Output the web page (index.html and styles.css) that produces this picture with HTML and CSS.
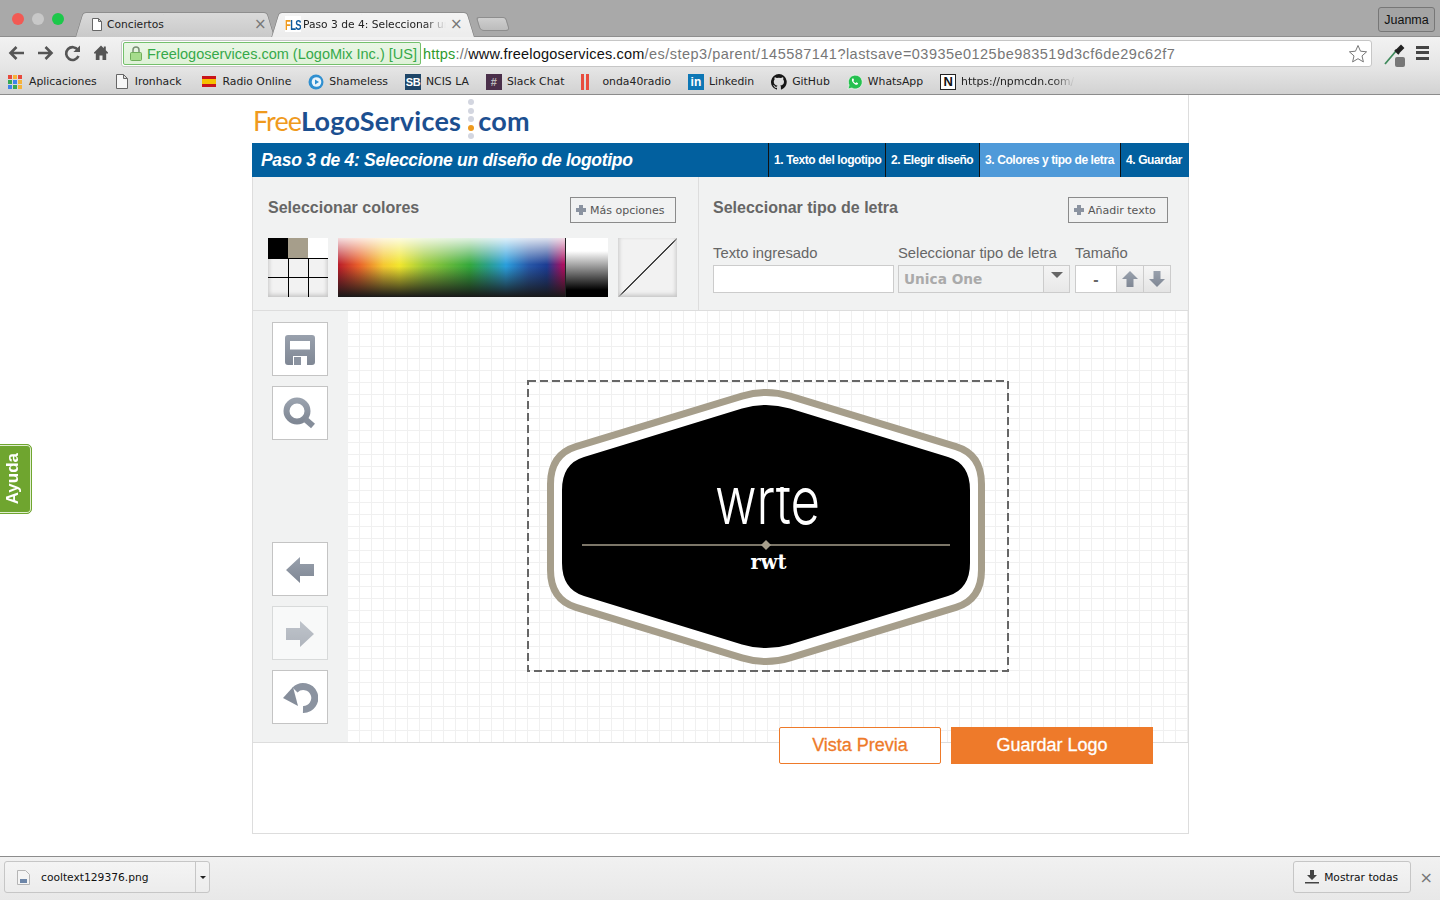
FILE: index.html
```html
<!DOCTYPE html>
<html lang="es">
<head>
    <meta charset="UTF-8">
    <meta name="viewport" content="width=device-width, initial-scale=1.0">
    <title>Paso 3 de 4: Seleccionar un diseño de logotipo</title>
    <link rel="stylesheet" href="styles.css">
</head>
<body>

    <!-- Ventana del navegador -->
    <header class="browser">
        <div class="titlebar">
            <div class="lights">
                <span class="light light-red"></span>
                <span class="light light-gray"></span>
                <span class="light light-green"></span>
            </div>
            <div class="tabs">
                <div class="tab">
                    <div class="tab-body">
                        <svg class="doc-icon" width="10" height="13" viewBox="0 0 10 13"><path d="M.5.5h6l3 3v9H.5zM6.5.5v3h3" fill="#fff" stroke="#666"/></svg>
                        <span class="tab-title tab-title-first">Conciertos</span>
                        <span class="tab-close">×</span>
                    </div>
                </div>
                <div class="tab tab-active">
                    <div class="tab-body">
                        <span class="fav-fls"><b class="fav-f">F</b><b class="fav-ls">LS</b></span>
                        <span class="tab-title tab-title-fade">Paso 3 de 4: Seleccionar un</span>
                        <span class="tab-close">×</span>
                    </div>
                </div>
                <div class="tab-new"></div>
            </div>
            <div class="user-button">Juanma</div>
        </div>

        <div class="toolbar">
            <svg class="nav-icon" width="28" height="18" viewBox="0 0 28 18"><path d="M21 9H8M13.5 3L7.5 9l6 6" fill="none" stroke="#555" stroke-width="2.6"/></svg>
            <svg class="nav-icon" width="28" height="18" viewBox="0 0 28 18"><path d="M7 9h13M14.5 3l6 6-6 6" fill="none" stroke="#555" stroke-width="2.6"/></svg>
            <svg class="nav-icon" width="28" height="18" viewBox="0 0 28 18"><path d="M19.5 12a6.4 6.4 0 1 1-.6-6" fill="none" stroke="#555" stroke-width="2.6"/><path d="M21 1.5v6.6h-6.6z" fill="#555"/></svg>
            <svg class="nav-icon" width="28" height="18" viewBox="0 0 28 18"><path d="M14 1.5L7 8.5v.9h1.8V16h3.7v-4.5h3V16h3.7V9.4H21v-.9l-2.200-2.200V2.500h-2V4.300z" fill="#555"/></svg>
            <div class="omnibox">
                <div class="ev-chip">
                    <svg width="12" height="15" viewBox="0 0 12 15"><path d="M3 7V4a3 3 0 0 1 6 0v3" fill="none" stroke="#7a8f74" stroke-width="1.500"/><rect x=".5" y="6.500" width="11" height="8" rx="1" fill="#a6dc8c" stroke="#6fae5a"/></svg>
                    <span>Freelogoservices.com (LogoMix Inc.) [US]</span>
                </div>
                <div class="url"><span class="url-https">https</span><span class="url-dim">://</span>www.freelogoservices.com<span class="url-path">/es/step3/parent/145587141?lastsave=03935e0125be983519d3cf6de29c62f7</span></div>
                <svg class="star" width="20" height="19" viewBox="0 0 20 19"><path d="M10 1.500l2.500 5.700 6.100.6-4.600 4.100 1.400 6-5.400-3.200-5.400 3.200 1.400-6L1.400 7.800l6.100-.6z" fill="#fff" stroke="#777"/></svg>
            </div>
            <svg class="dropper" width="24" height="24" viewBox="0 0 24 24"><path d="M1 21L12 8" stroke="#3f8a5c" stroke-width="1.800"/><path d="M11 7l4 4M13 7l4-4 2 2-4 4z" stroke="#222" stroke-width="2" fill="#222"/><rect x="11" y="14" width="10" height="10" rx="2" fill="#777"/></svg>
            <div class="menu-icon"><span></span><span></span><span></span></div>
        </div>

        <nav class="bookmarks">
            <div class="bm bm-apps">
                <span class="apps-icon">
                    <i class="c-r"></i><i class="c-y"></i><i class="c-r"></i>
                    <i class="c-g"></i><i class="c-b"></i><i class="c-y"></i>
                    <i class="c-b"></i><i class="c-g"></i><i class="c-y"></i>
                </span>
                <span>Aplicaciones</span>
            </div>
            <div class="bm bm-wide">
                <svg class="bm-doc" width="12" height="15" viewBox="0 0 12 15"><path d="M.5.5h7l4 4v10H.5zM7.500.5v4h4" fill="#f6f6f6" stroke="#666"/></svg>
                <span>Ironhack</span>
            </div>
            <div class="bm">
                <span class="flag-es"></span>
                <span>Radio Online</span>
            </div>
            <div class="bm">
                <svg width="16" height="16" viewBox="0 0 16 16"><circle cx="8" cy="8" r="7.500" fill="#2f8fd0"/><circle cx="8.500" cy="8" r="4.800" fill="#eaf4fb"/><path d="M7 5.500L11 8l-4 2.500z" fill="#2f8fd0"/></svg>
                <span>Shameless</span>
            </div>
            <div class="bm">
                <span class="fav-box fav-sb">SB</span>
                <span>NCIS LA</span>
            </div>
            <div class="bm">
                <span class="fav-box fav-slack">#</span>
                <span>Slack Chat</span>
            </div>
            <div class="bm">
                <span class="fav-onda"><i></i><i></i></span>
                <span>onda40radio</span>
            </div>
            <div class="bm">
                <span class="fav-box fav-in">in</span>
                <span>Linkedin</span>
            </div>
            <div class="bm">
                <svg width="16" height="16" viewBox="0 0 16 16"><path d="M8 0a8 8 0 0 0-2.500 15.600c.4.1.5-.2.5-.4v-1.400c-2.200.5-2.700-1-2.700-1-.4-.9-.9-1.200-.9-1.200-.7-.5.1-.5.1-.5.8.1 1.200.8 1.200.8.700 1.200 1.900.9 2.300.7.100-.5.300-.9.500-1.100-1.800-.2-3.700-.9-3.700-4 0-.9.300-1.600.8-2.100-.1-.2-.4-1 .1-2.100 0 0 .7-.2 2.200.8a7.500 7.500 0 0 1 4 0c1.500-1 2.200-.8 2.200-.8.4 1.100.2 1.900.1 2.100.5.600.8 1.300.8 2.100 0 3.100-1.900 3.700-3.700 3.900.3.300.6.800.6 1.500v2.200c0 .2.100.5.600.4A8 8 0 0 0 8 0z" fill="#161616"/></svg>
                <span>GitHub</span>
            </div>
            <div class="bm">
                <svg width="16" height="16" viewBox="0 0 16 16"><path d="M1 15l1.100-3.900A6.900 6.900 0 1 1 4.800 14z" fill="#25c04f" stroke="#fff" stroke-width=".6"/><path d="M5.500 4.500c-1 1-.8 2.500.6 4.200 1.500 1.700 3.200 2.500 4.300 1.800.6-.4.800-1 .7-1.300l-1.700-.9-.7.800c-.8-.2-2-1.400-2.300-2.200l.7-.8-.8-1.700c-.3-.1-.5 0-.8.100z" fill="#fff"/></svg>
                <span>WhatsApp</span>
            </div>
            <div class="bm">
                <span class="fav-box fav-n">N</span>
                <span class="bm-fade">https://npmcdn.com/</span>
            </div>
        </nav>
    </header>

    <main class="viewport">
        <a class="help-tab"><span>Ayuda</span></a>

        <div class="page">
            <div class="brand">
                <span class="brand-free">Free</span><span class="brand-name">LogoServices</span>
                <span class="brand-dots"><i></i><i></i><i></i><i class="dot-orange"></i><i></i></span>
                <span class="brand-name">com</span>
            </div>

            <div class="step-bar">
                <h1>Paso 3 de 4: Seleccione un diseño de logotipo</h1>
                <ul class="steps">
                    <li>1. Texto del logotipo</li>
                    <li>2. Elegir diseño</li>
                    <li class="step-current">3. Colores y tipo de letra</li>
                    <li>4. Guardar</li>
                </ul>
            </div>

            <section class="panels">
                <div class="panel panel-colors">
                    <div class="panel-head">
                        <h2>Seleccionar colores</h2>
                        <button class="small-btn"><span class="plus"></span>Más opciones</button>
                    </div>
                    <div class="color-row">
                        <div class="swatches">
                            <span class="sw sw-black"></span><span class="sw sw-tan"></span><span class="sw sw-white"></span>
                            <span class="sw sw-first"></span><span class="sw"></span><span class="sw"></span>
                            <span class="sw sw-first"></span><span class="sw"></span><span class="sw"></span>
                        </div>
                        <div class="spectrum"></div>
                        <div class="grayscale"></div>
                        <div class="no-color"></div>
                    </div>
                </div>
                <div class="panel panel-font">
                    <div class="panel-head panel-head-font">
                        <h2>Seleccionar tipo de letra</h2>
                        <button class="small-btn small-btn-add"><span class="plus"></span>Añadir texto</button>
                    </div>
                    <div class="fields">
                        <div class="field field-text">
                            <label>Texto ingresado</label>
                            <div class="text-input"></div>
                        </div>
                        <div class="field field-font">
                            <label>Seleccionar tipo de letra</label>
                            <div class="select">
                                <span class="select-value">Unica One</span>
                                <span class="select-arrow"><i></i></span>
                            </div>
                        </div>
                        <div class="field field-size">
                            <label>Tamaño</label>
                            <div class="size-input">
                                <span class="size-value">-</span>
                                <span class="size-btn"><svg width="18" height="18" viewBox="0 0 18 18"><path d="M9 1l8 8h-4.500v8h-7V9H1z" fill="url(#iconGrad)"/></svg></span>
                                <span class="size-btn"><svg width="18" height="18" viewBox="0 0 18 18"><path d="M9 17L1 9h4.500V1h7v8H17z" fill="url(#iconGrad)"/></svg></span>
                            </div>
                        </div>
                    </div>
                </div>
            </section>

            <section class="work">
                <aside class="tools">
                    <button class="tool">
                        <svg width="30" height="30" viewBox="0 0 30 30">
                            <defs>
                                <linearGradient id="iconGrad" x1="0" y1="0" x2="0" y2="1">
                                    <stop offset="0" stop-color="#99a1ad"/>
                                    <stop offset="1" stop-color="#7f8794"/>
                                </linearGradient>
                            </defs>
                            <path d="M3 0h24a3 3 0 0 1 3 3v24a3 3 0 0 1-3 3h-5v-9H8v9H3a3 3 0 0 1-3-3V3a3 3 0 0 1 3-3zM5 6v8.500h20V6z" fill="url(#iconGrad)" fill-rule="evenodd"/>
                            <rect x="9" y="22" width="7" height="8" fill="#8b93a0"/>
                        </svg>
                    </button>
                    <button class="tool">
                        <svg width="34" height="34" viewBox="0 0 34 34"><circle cx="14" cy="14" r="10.500" fill="none" stroke="url(#iconGrad)" stroke-width="6"/><path d="M22 22l8 7" stroke="#858d9a" stroke-width="6"/></svg>
                    </button>
                    <button class="tool tool-gap">
                        <svg width="30" height="26" viewBox="0 0 30 26"><path d="M1 13L15 0v7h14v12H15v7z" fill="url(#iconGrad)"/></svg>
                    </button>
                    <button class="tool tool-off">
                        <svg width="30" height="26" viewBox="0 0 30 26"><path d="M29 13L15 0v7H1v12h14v7z" fill="url(#iconGrad)"/></svg>
                    </button>
                    <button class="tool">
                        <svg width="36" height="32" viewBox="0 0 36 32"><path d="M13 8A11.500 11.500 0 1 1 21 27.500" fill="none" stroke="#8b93a0" stroke-width="7"/><path d="M1 16L11 5l5 19z" fill="#858d9a"/></svg>
                    </button>
                </aside>

                <div class="canvas">
                    <svg class="logo-art" width="482" height="292" viewBox="527 380 482 292">
                        <rect x="528" y="381" width="480" height="290" fill="none" stroke="#666" stroke-width="2" stroke-dasharray="8 4"/>
                        <path d="M742 396.150Q766 388.850 790 396.150L956 446.600Q981.500 454.400 981.500 484V570Q981.500 599.600 956 607.400L790 657.850Q766 665.150 742 657.850L576 607.400Q550.500 599.600 550.500 570V484Q550.500 454.400 576 446.600Z" fill="#fff" stroke="#a69e8b" stroke-width="7"/>
                        <path d="M742 408.600Q766 401.300 790 408.600L948 457Q970 463.700 970 490V563Q970 589.300 948 596L790 644.400Q766 651.700 742 644.400L584 596Q562 589.300 562 563V490Q562 463.700 584 457Z" fill="#000"/>
                        <clipPath id="wordClip"><rect x="700" y="487" width="140" height="40"/></clipPath>
                        <g clip-path="url(#wordClip)">
                            <text class="logo-word" x="715" y="523.500" textLength="105" lengthAdjust="spacingAndGlyphs">wrte</text>
                        </g>
                        <path d="M582 545H950" stroke="#a69e8b" stroke-width="1.500"/>
                        <path d="M766 540l5 5-5 5-5-5z" fill="#a69e8b"/>
                        <text class="logo-sub" x="768.500" y="569" text-anchor="middle">rwt</text>
                    </svg>
                </div>
            </section>

            <footer class="actions">
                <button class="btn-outline">Vista Previa</button>
                <button class="btn-solid">Guardar Logo</button>
            </footer>
        </div>
    </main>

    <!-- Barra de descargas -->
    <footer class="shelf">
        <div class="download-chip">
            <svg width="13" height="15" viewBox="0 0 13 15"><path d="M.5.5h8l4 4v10H.5z" fill="#f4f4f4" stroke="#b5b5b5"/><rect x="3" y="9" width="7" height="4" fill="#6d86a8"/></svg>
            <span class="file-name">cooltext129376.png</span>
            <span class="chip-caret"><i></i></span>
        </div>
        <div class="show-all">
            <svg width="14" height="14" viewBox="0 0 14 14"><path d="M5 0h4v5h3L7 10 2 5h3zM0 12h14v1.500H0z" fill="#444"/></svg>
            <span>Mostrar todas</span>
        </div>
        <span class="shelf-close">×</span>
    </footer>

</body>
</html>
```

FILE: styles.css
```css
* {
    box-sizing: border-box;
}

body {
    display: flex;
    flex-direction: column;
    height: 100vh;
    margin: 0;
    overflow: hidden;
    background: #fff;
    font-family: "Liberation Sans", Arial, sans-serif;
}

/* Navegador */
.browser {
    flex: none;
    font-family: "DejaVu Sans", sans-serif;
    font-size: 10.850px;
    color: #222;
}

.titlebar {
    display: flex;
    align-items: flex-end;
    height: 36px;
    padding-left: 12px;
    background: #a9a9a9;
}

.lights {
    display: flex;
    gap: 8px;
    align-self: flex-start;
    margin-top: 13px;
}

.light {
    width: 12px;
    height: 12px;
    border-radius: 50%;
}

.light-red { background: #f25a54; }
.light-gray { background: #c8c8c8; }
.light-green { background: #1cc84a; }

.tabs {
    display: flex;
    align-items: flex-end;
    margin-left: 11px;
    flex: 1;
    position: relative;
    z-index: 2;
}

.tab {
    position: relative;
    width: 200px;
    height: 25px;
    margin-bottom: -1px;
}

.tab::before,
.tab::after {
    content: '';
    position: absolute;
    top: 0;
    bottom: 0;
    width: 52%;
    background: linear-gradient(#dadada, #c9c9c9);
    border-top: 1px solid #8e8e8e;
}

.tab::before {
    left: 0;
    border-left: 1px solid #8e8e8e;
    border-radius: 4px 0 0 0;
    transform: skewX(-17deg);
    transform-origin: bottom left;
}

.tab::after {
    right: 0;
    border-right: 1px solid #8e8e8e;
    border-radius: 0 4px 0 0;
    transform: skewX(17deg);
    transform-origin: bottom right;
}

.tab-active {
    width: 204px;
    margin-left: -4px;
    z-index: 2;
}

.tab-active::before,
.tab-active::after {
    background: linear-gradient(#f4f4f4, #ececec);
}

.tab-body {
    position: relative;
    z-index: 1;
    display: flex;
    align-items: center;
    height: 24px;
    padding-left: 17px;
}

.tab-active .tab-body {
    padding-left: 14px;
}

.doc-icon {
    flex: none;
    margin-right: 5px;
}

.tab-title {
    overflow: hidden;
    white-space: nowrap;
    font-size: 10.700px;
}

.tab-title-first {
    width: 143px;
}

.tab-title-fade {
    width: 143px;
    margin-left: 2px;
    -webkit-mask-image: linear-gradient(to right, #000 85%, transparent);
    mask-image: linear-gradient(to right, #000 85%, transparent);
}

.tab-close {
    margin-left: 4px;
    font-size: 15px;
    line-height: 15px;
    color: #777;
}

.fav-fls {
    flex: none;
    width: 16px;
    height: 16px;
    display: flex;
    align-items: center;
    justify-content: center;
    overflow: hidden;
    background: #fff;
    font-family: "Liberation Sans", sans-serif;
    font-size: 9.500px;
    letter-spacing: -.6px;
}

.fav-fls b {
    display: inline-block;
    transform: scaleY(1.5);
}

.fav-f { color: #ef9a1d; }
.fav-ls { color: #0d5a9c; }

.tab-new {
    width: 30px;
    height: 14px;
    margin: 0 0 5px 3px;
    background: linear-gradient(#cfcfcf, #bcbcbc);
    border: 1px solid #8e8e8e;
    border-radius: 3px 3px 4px 4px;
    transform: skewX(17deg);
}

.user-button {
    align-self: flex-start;
    width: 57px;
    height: 25px;
    margin: 7px 5px 0 0;
    border: 1px solid #777;
    border-radius: 3px;
    background: #a4a4a4;
    text-align: center;
    font-family: "Liberation Sans", sans-serif;
    font-size: 12.500px;
    line-height: 24px;
    color: #111;
}

.toolbar {
    display: flex;
    align-items: center;
    height: 32px;
    padding-left: 3px;
    border-top: 1px solid #8e8e8e;
    background: linear-gradient(#f2f2f2, #e5e5e5);
}

.nav-icon {
    flex: none;
}

.omnibox {
    display: flex;
    align-items: center;
    width: 1251px;
    height: 27px;
    margin: 2px 0 0 6px;
    padding-left: 1px;
    background: #fff;
    border: 1px solid #c6c6c6;
    border-radius: 3px;
    font-family: "Liberation Sans", sans-serif;
    font-size: 14.500px;
    color: #111;
}

.ev-chip {
    display: flex;
    align-items: center;
    gap: 5px;
    flex: none;
    width: 298px;
    height: 23px;
    padding-left: 6px;
    background: linear-gradient(#eaf6e6, #dff1d8);
    border: 1px solid #74c06c;
    border-radius: 2px;
    color: #36a94a;
}

.url {
    flex: 1;
    margin-left: 2px;
    white-space: nowrap;
    letter-spacing: .2px;
}

.url-https { color: #2d9a2d; }
.url-dim { color: #777; }

.url-path {
    color: #777;
    letter-spacing: .47px;
}

.star {
    flex: none;
    margin-right: 3px;
}

.dropper {
    flex: none;
    margin: 4px 0 0 12px;
}

.menu-icon {
    display: flex;
    flex-direction: column;
    gap: 2.500px;
    margin-left: 8px;
}

.menu-icon span {
    display: block;
    width: 13px;
    height: 3px;
    background: #444;
}

.bookmarks {
    display: flex;
    align-items: center;
    gap: 17px;
    height: 27px;
    padding: 1px 0 0 8px;
    background: linear-gradient(#e5e5e5, #d2d2d2);
    border-bottom: 1px solid #8c8c8c;
    white-space: nowrap;
}

.bm {
    display: flex;
    align-items: center;
    gap: 5px;
}

.bm-apps {
    margin-right: 2px;
}

.bm-wide {
    margin-right: 4px;
}

.bm-doc {
    margin-right: 2px;
}

.apps-icon {
    display: grid;
    grid-template-columns: repeat(3, 4px);
    grid-auto-rows: 4px;
    gap: 1px;
    margin-right: 2px;
}

.c-r { background: #e8483c; }
.c-y { background: #f6b23a; }
.c-g { background: #35a853; }
.c-b { background: #3f83ea; }

.flag-es {
    width: 14px;
    height: 11px;
    margin-right: 1px;
    background: linear-gradient(#c9151b 27%, #f6c100 27%, #f6c100 73%, #c9151b 73%);
}

.fav-box {
    width: 16px;
    height: 16px;
    display: flex;
    align-items: center;
    justify-content: center;
    font-family: "Liberation Sans", sans-serif;
    font-weight: bold;
    color: #fff;
}

.fav-sb { background: #1f4668; font-size: 11px; letter-spacing: -.5px; }
.fav-slack { background: #4a2f4a; font-size: 11px; color: #bbb; }
.fav-in { background: #0d77b5; font-size: 12px; }
.fav-n { background: #fff; border: 1px solid #222; color: #111; font-size: 13px; }

.fav-onda {
    display: flex;
    gap: 2px;
    width: 16px;
}

.fav-onda i {
    width: 3px;
    height: 16px;
    background: #e84c3d;
}

.bm-fade {
    width: 114px;
    overflow: hidden;
    -webkit-mask-image: linear-gradient(to right, #000 80%, transparent);
    mask-image: linear-gradient(to right, #000 80%, transparent);
}

/* Contenido */
.viewport {
    position: relative;
    flex: 1;
    min-height: 0;
}

.help-tab {
    position: absolute;
    left: -6px;
    top: 349px;
    display: flex;
    align-items: center;
    justify-content: center;
    width: 38px;
    height: 70px;
    background: #6fa52f;
    border: 1px solid #6fa52f;
    border-radius: 5px;
    box-shadow: inset 0 0 0 1px #e0eecf;
    color: #fff;
}

.help-tab span {
    writing-mode: vertical-rl;
    transform: rotate(180deg);
    font-size: 17px;
    font-weight: bold;
}

.page {
    width: 937px;
    height: 739px;
    margin-left: 252px;
    border-right: 1px solid #ddd;
    border-left: 1px solid #ddd;
    border-bottom: 1px solid #ddd;
}

.brand {
    display: flex;
    align-items: center;
    height: 48px;
    margin-left: -1px;
    padding-left: 1px;
    padding-top: 2px;
    background: #fff;
    font-family: "Lato", sans-serif;
    font-size: 27px;
    line-height: 1;
}

.brand-free {
    color: #ef9a1d;
    letter-spacing: -1px;
}

.brand-name {
    font-weight: bold;
    color: #1c4f90;
    letter-spacing: .25px;
}

.brand-dots {
    display: flex;
    flex-direction: column;
    gap: 2.500px;
    margin: -2px 4px 0 7px;
}

.brand-dots i {
    width: 6px;
    height: 6px;
    border-radius: 50%;
    background: #d3d6e0;
}

.brand-dots .dot-orange {
    background: #ef9a1d;
}

.step-bar {
    display: flex;
    justify-content: space-between;
    height: 34px;
    margin: 0 -1px;
    padding-left: 9px;
    background: #02609f;
    color: #fff;
}

.step-bar h1 {
    margin: 0;
    font-size: 17.500px;
    font-style: italic;
    font-weight: bold;
    line-height: 34px;
    letter-spacing: -.3px;
}

.steps {
    display: grid;
    grid-template-columns: 117px 94px 141px 69px;
    margin: 0;
    padding: 0;
    list-style: none;
    font-size: 12px;
    font-weight: bold;
    line-height: 34px;
    letter-spacing: -.4px;
}

.steps li {
    padding-left: 5px;
    border-left: 1px solid #111;
    white-space: nowrap;
}

.steps .step-current {
    background: #4f9ad9;
}

.panels {
    display: flex;
    height: 134px;
    background: #f1f2f2;
    border-bottom: 1px solid #ddd;
}

.panel {
    padding-top: 20px;
}

.panel-colors {
    width: 446px;
    padding: 20px 22px 0 15px;
    border-right: 1px solid #ddd;
}

.panel-font {
    flex: 1;
    padding: 20px 17px 0 14px;
}

.panel-head {
    display: flex;
    justify-content: space-between;
    align-items: flex-start;
    height: 26px;
}

.panel-head h2 {
    margin: 0;
    font-size: 16px;
    line-height: 21px;
    color: #666;
}

.panel-head-font {
    padding-right: 3px;
}

.small-btn {
    display: flex;
    align-items: center;
    gap: 4px;
    width: 106px;
    height: 26px;
    padding: 0 0 0 5px;
    background: #f1f2f2;
    border: 1px solid #8b8b8b;
    font-family: "DejaVu Sans", sans-serif;
    font-size: 11px;
    color: #555;
}

.small-btn-add {
    width: 100px;
}

.plus {
    position: relative;
    width: 10px;
    height: 10px;
    background: linear-gradient(#8b93a0, #8b93a0) center / 10px 4px no-repeat,
                linear-gradient(#8b93a0, #8b93a0) center / 4px 10px no-repeat;
}

.color-row {
    display: flex;
    margin-top: 15px;
    height: 59px;
}

.swatches {
    display: grid;
    flex: none;
    grid-template-columns: repeat(3, 20px);
    grid-template-rows: repeat(3, 1fr);
    width: 60px;
    background: #f2f2f2;
    box-shadow: inset 0 -4px 5px -2px #c4c4c4, inset 3px 0 4px -2px #ccc, inset -3px 0 4px -2px #ccc;
}

.sw {
    border-top: 1px solid #000;
    border-left: 1px solid #000;
}

.sw-first {
    border-left: 0;
}

.sw-black,
.sw-tan,
.sw-white {
    border: 0;
}

.sw-black { background: #000; }
.sw-tan { background: #a69e8b; }
.sw-white { background: #fff; }

.spectrum {
    flex: none;
    width: 228px;
    margin-left: 10px;
    border-right: 1px solid #222;
    background:
        linear-gradient(rgba(255, 255, 255, .85), rgba(255, 255, 255, 0) 45%, rgba(0, 0, 0, 0) 48%, rgba(25, 25, 25, 1) 100%),
        linear-gradient(to right, #b81c2a, #e8602a 9%, #f5c832 20%, #f2e62e 27%, #9ecb3a 38%, #34a83c 58%, #2a9f8a 66%, #2a9edc 74%, #2758a8 84%, #1c3c92 92%, #a81060 99%);
}

.grayscale {
    flex: none;
    width: 42px;
    background: linear-gradient(#fff 22%, #000 88%);
}

.no-color {
    flex: none;
    width: 59px;
    margin-left: 10px;
    background:
        linear-gradient(to top left, transparent calc(50% - 1px), #444 calc(50% - 1px), #444 calc(50% + .5px), transparent calc(50% + .5px)),
        #f2f2f2;
    box-shadow: inset 0 -4px 5px -2px #c4c4c4, inset 3px 0 4px -2px #ccc, inset -3px 0 4px -2px #ccc;
}

.fields {
    display: flex;
    margin-top: 15px;
}

.field {
    display: flex;
    flex-direction: column;
}

.field label {
    height: 27px;
    font-size: 14.800px;
    line-height: 30px;
    color: #666;
    white-space: nowrap;
}

.field-text { width: 181px; margin-right: 4px; }
.field-font { width: 172px; margin-right: 5px; }
.field-size { width: 96px; }

.text-input {
    height: 28px;
    background: #fff;
    border: 1px solid #ccc;
}

.select {
    display: flex;
    height: 28px;
    background: #f1f2f2;
    border: 1px solid #ccc;
}

.select-value {
    flex: 1;
    padding-left: 5px;
    font-family: "DejaVu Sans", sans-serif;
    font-size: 13.700px;
    font-weight: bold;
    line-height: 26px;
    color: #aaa;
}

.select-arrow {
    display: flex;
    justify-content: center;
    width: 26px;
    padding-top: 6px;
    border-left: 1px solid #ccc;
    background: linear-gradient(#f4f4f4, #e8e8e8);
}

.select-arrow i {
    width: 0;
    height: 0;
    border-top: 6px solid #666;
    border-left: 6px solid transparent;
    border-right: 6px solid transparent;
}

.size-input {
    display: flex;
    height: 28px;
    background: #fff;
    border: 1px solid #ccc;
}

.size-value {
    flex: 1;
    text-align: center;
    font-size: 16px;
    font-weight: bold;
    line-height: 28px;
    color: #666;
}

.size-btn {
    display: flex;
    align-items: center;
    justify-content: center;
    width: 27px;
    border-left: 1px solid #ccc;
    background: linear-gradient(#f6f6f6, #e4e4e4);
}

.work {
    display: flex;
    height: 432px;
    border-bottom: 1px solid #ddd;
}

.tools {
    display: flex;
    flex-direction: column;
    gap: 10px;
    flex: none;
    width: 95px;
    padding: 11px 0 0 19px;
    background: #f1f2f2;
}

.tool {
    display: flex;
    align-items: center;
    justify-content: center;
    width: 56px;
    height: 54px;
    padding: 0;
    background: #fff;
    border: 1px solid #c4c4c4;
}

.tool svg {
    margin-top: 2px;
}

.tool-gap {
    margin-top: 92px;
}

.tool-off {
    background: #f8f9f9;
    border-color: #d8dada;
}

.tool-off svg {
    opacity: .6;
}

.canvas {
    flex: 1;
    padding: 69px 0 0 179px;
    background-color: #fff;
    background-image:
        linear-gradient(to right, transparent 11px, #f0f0f0 11px),
        linear-gradient(to bottom, transparent 11px, #f0f0f0 11px);
    background-size: 12px 12px;
}

.logo-art {
    display: block;
}

.logo-word {
    font-family: "Inter", sans-serif;
    font-size: 66px;
    font-weight: 300;
    fill: #fff;
}

.logo-sub {
    font-family: "DejaVu Serif", serif;
    font-size: 19.500px;
    font-weight: bold;
    fill: #fff;
}

.actions {
    display: flex;
    justify-content: flex-end;
    gap: 10px;
    margin-top: -16px;
    padding-right: 35px;
}

.btn-outline,
.btn-solid {
    height: 37px;
    padding: 0;
    font-family: "Liberation Sans", sans-serif;
    font-size: 18px;
    -webkit-text-stroke: .3px;
}

.btn-outline {
    width: 162px;
    background: #fff;
    border: 1px solid #ee7a2a;
    border-radius: 2px;
    color: #ee7a2a;
}

.btn-solid {
    width: 202px;
    background: #ee7a2a;
    border: 0;
    color: #fff;
}

/* Barra de descargas */
.shelf {
    display: flex;
    align-items: center;
    flex: none;
    height: 44px;
    padding: 0 7px 3px 4px;
    background: linear-gradient(#f1f1f1, #e8e8e8);
    border-top: 1px solid #8c8c8c;
    font-family: "DejaVu Sans", sans-serif;
    font-size: 10.700px;
    color: #111;
}

.download-chip {
    display: flex;
    align-items: center;
    width: 206px;
    height: 32px;
    padding-left: 12px;
    background: linear-gradient(#f4f4f4, #ececec);
    border: 1px solid #c6c6c6;
    border-radius: 3px;
}

.file-name {
    flex: 1;
    margin-left: 11px;
}

.chip-caret {
    display: flex;
    align-items: center;
    justify-content: center;
    width: 14px;
    height: 30px;
    border-left: 1px solid #c6c6c6;
}

.chip-caret i {
    width: 0;
    height: 0;
    border-top: 3px solid #222;
    border-left: 3px solid transparent;
    border-right: 3px solid transparent;
}

.show-all {
    display: flex;
    align-items: center;
    justify-content: center;
    gap: 5px;
    width: 118px;
    height: 32px;
    margin-left: auto;
    background: linear-gradient(#f4f4f4, #ececec);
    border: 1px solid #c6c6c6;
    border-radius: 3px;
}

.shelf-close {
    margin-left: 9px;
    font-size: 16px;
    color: #777;
}
```
